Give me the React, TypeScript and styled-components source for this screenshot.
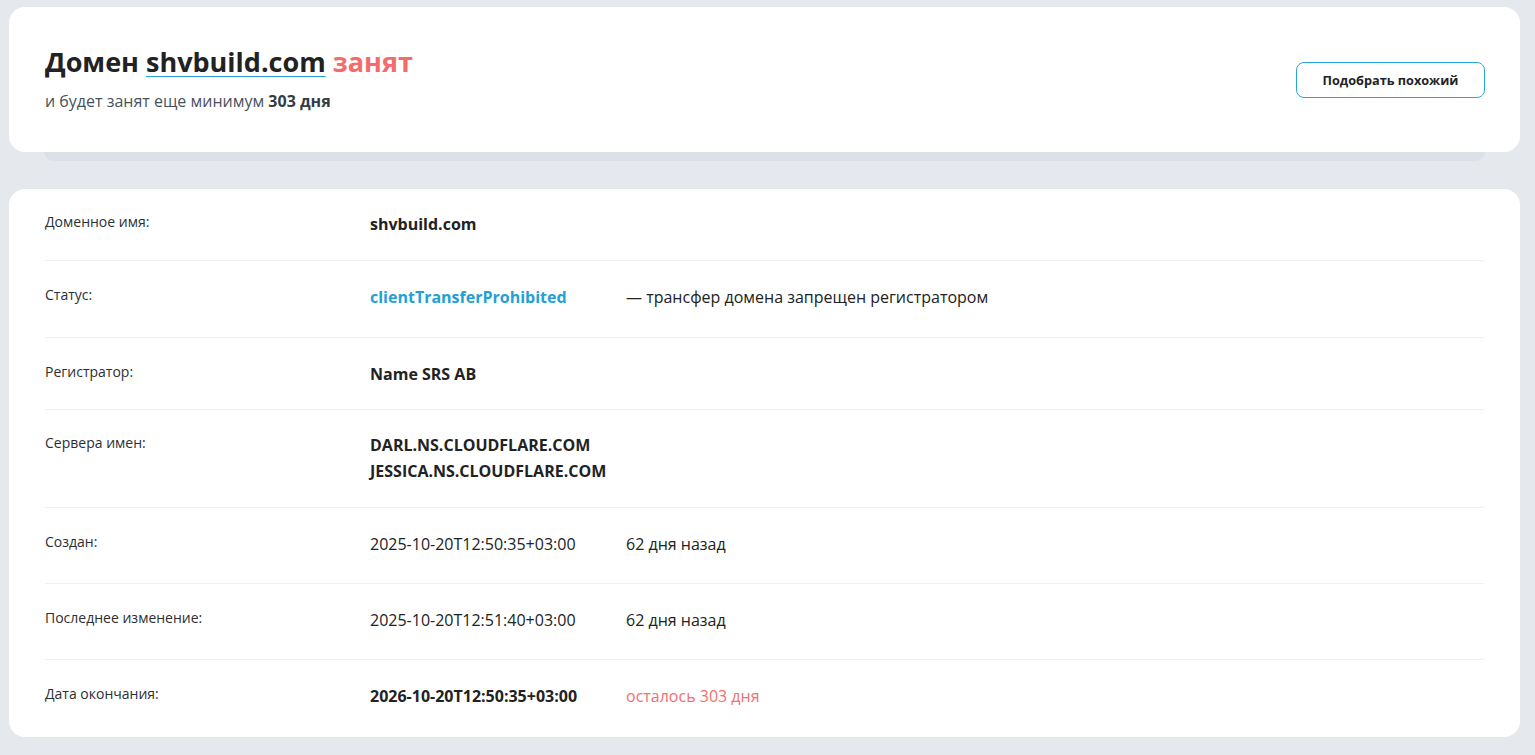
import React from "react";
import styled, { createGlobalStyle } from "styled-components";

const Global = createGlobalStyle`
  html, body { margin: 0; padding: 0; background: #e5e9ed; }
  body { font-family: "Open Sans", "Noto Sans", sans-serif; color: #222; -webkit-font-smoothing: antialiased; }
`;

const Page = styled.div`
  padding: 7px 15px 18px 9px;
  display: flex;
  flex-direction: column;
`;

const HeadCard = styled.section`
  background: #fff;
  border-radius: 16px;
  height: 145px;
  box-sizing: border-box;
  padding: 0 35px 0 36px;
  display: flex;
  align-items: center;
  justify-content: space-between;
`;

const Stack = styled.div`
  height: 9px;
  margin: 0 35px;
  background: #dbe1e7;
  border-radius: 0 0 12px 12px;
`;

const HeadText = styled.div`
  display: flex;
  flex-direction: column;
  gap: 10px;
  margin-bottom: 3px;
`;

const Title = styled.h1`
  margin: 0;
  font-size: 27px;
  line-height: 36px;
  font-weight: 700;
  color: #222;
`;

const DomainLink = styled.span`
  text-decoration: underline;
  text-decoration-color: #2a9fd6;
  text-decoration-thickness: 1px;
  text-underline-offset: 4px;
`;

const Busy = styled.span`
  color: #f36b6b;
`;

const Sub = styled.p`
  margin: 0;
  font-size: 16px;
  line-height: 22px;
  color: #48525c;
  b { color: #333c45; font-weight: 700; }
`;

const Button = styled.button`
  font-family: inherit;
  width: 189px;
  height: 36px;
  border: 1px solid #27a5dc;
  border-radius: 8px;
  background: #fff;
  font-size: 12.7px;
  font-weight: 700;
  color: #1f2328;
  margin-top: 1px;
  cursor: pointer;
`;

const InfoCard = styled.section`
  margin-top: 28px;
  background: #fff;
  border-radius: 16px;
  padding: 0 36px;
  overflow: hidden;
`;

const Row = styled.div<{ $pt: number; $pb: number; $full?: boolean }>`
  display: grid;
  grid-template-columns: 325px 256px 1fr;
  align-items: start;
  padding: ${(p) => p.$pt}px ${(p) => (p.$full ? 36 : 0)}px ${(p) => p.$pb}px;
  margin: 0 ${(p) => (p.$full ? -36 : 0)}px;
  border-bottom: 1px solid #eef0f2;
  &:last-child { border-bottom: none; }
`;

const Label = styled.div`
  font-size: 14px;
  line-height: 24px;
  color: #2b2f33;
  margin-top: -1px;
`;

const Value = styled.div<{ $bold?: boolean; $color?: string }>`
  font-size: 16px;
  line-height: 26px;
  font-weight: ${(p) => (p.$bold ? 700 : 400)};
  color: ${(p) => p.$color || "#222"};
  white-space: nowrap;
`;

const Lines = styled.div`
  grid-column: 2 / 4;
  display: flex;
  flex-direction: column;
`;

export default function App() {
  return (
    <>
      <Global />
      <Page>
        <HeadCard>
          <HeadText>
            <Title>
              Домен <DomainLink>shvbuild.com</DomainLink> <Busy>занят</Busy>
            </Title>
            <Sub>
              и будет занят еще минимум <b>303 дня</b>
            </Sub>
          </HeadText>
          <Button>Подобрать похожий</Button>
        </HeadCard>
        <Stack />
        <InfoCard>
          <Row $pt={22} $pb={23}>
            <Label>Доменное имя:</Label>
            <Value $bold>shvbuild.com</Value>
          </Row>
          <Row $pt={23} $pb={27}>
            <Label>Статус:</Label>
            <Value $bold $color="#1fa1d8">clientTransferProhibited</Value>
            <Value>— трансфер домена запрещен регистратором</Value>
          </Row>
          <Row $pt={23} $pb={22}>
            <Label>Регистратор:</Label>
            <Value $bold>Name SRS AB</Value>
          </Row>
          <Row $pt={22} $pb={23}>
            <Label>Сервера имен:</Label>
            <Lines>
              <Value $bold>DARL.NS.CLOUDFLARE.COM</Value>
              <Value $bold>JESSICA.NS.CLOUDFLARE.COM</Value>
            </Lines>
          </Row>
          <Row $pt={23} $pb={26}>
            <Label>Создан:</Label>
            <Value>2025-10-20T12:50:35+03:00</Value>
            <Value>62 дня назад</Value>
          </Row>
          <Row $pt={23} $pb={26}>
            <Label>Последнее изменение:</Label>
            <Value>2025-10-20T12:51:40+03:00</Value>
            <Value>62 дня назад</Value>
          </Row>
          <Row $pt={23} $pb={28} $full>
            <Label>Дата окончания:</Label>
            <Value $bold>2026-10-20T12:50:35+03:00</Value>
            <Value $color="#f26f6f">осталось 303 дня</Value>
          </Row>
        </InfoCard>
      </Page>
    </>
  );
}
